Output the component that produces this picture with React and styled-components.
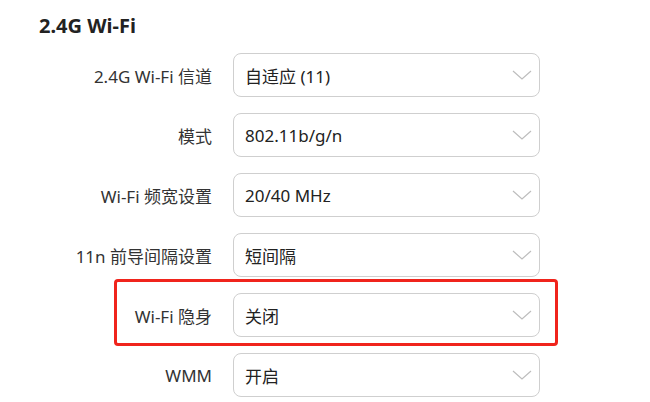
import styled, { createGlobalStyle } from "styled-components";

const GlobalStyle = createGlobalStyle`
  html, body {
    margin: 0;
    padding: 0;
    background: #fff;
  }
  body {
    font-family: "Noto Sans", "Noto Sans CJK SC", sans-serif;
    color: #222;
  }
`;

const Page = styled.div`
  padding: 14px 0 0 39px;
  width: 650px;
  height: 402px;
  box-sizing: border-box;
  overflow: hidden;
`;

const Title = styled.h2`
  margin: 0 0 15px;
  font-size: 20px;
  line-height: 24px;
  font-weight: 700;
  color: #222;
`;

const Form = styled.div`
  display: flex;
  flex-direction: column;
  gap: 16px;
`;

const Row = styled.div`
  position: relative;
  display: grid;
  grid-template-columns: 173px 307px;
  column-gap: 21px;
  align-items: center;
  height: 44px;

  ${(p) =>
    p.$highlight &&
    `
    &::after {
      content: "";
      position: absolute;
      left: 75px;
      top: -14px;
      width: 444px;
      height: 67px;
      border: 3px solid #f0241c;
      border-radius: 4px;
      box-sizing: border-box;
      pointer-events: none;
    }
  `}
`;

const Label = styled.label`
  text-align: right;
  font-size: 17px;
  color: #333;
  white-space: nowrap;
`;

const Select = styled.div`
  display: flex;
  align-items: center;
  justify-content: space-between;
  height: 44px;
  box-sizing: border-box;
  padding: 0 7px 0 11px;
  border: 1px solid #cfcfcf;
  border-radius: 8px;
  background: #fff;
`;

const Value = styled.span`
  font-size: 17px;
  color: #222;
`;

const Chevron = () => (
  <svg width="20" height="10" viewBox="0 0 20 10" fill="none">
    <path d="M1 1 L10 9 L19 1" stroke="#bdbdbd" strokeWidth="1.2" />
  </svg>
);

const fields = [
  { label: "2.4G Wi-Fi 信道", value: "自适应 (11)" },
  { label: "模式", value: "802.11b/g/n" },
  { label: "Wi-Fi 频宽设置", value: "20/40 MHz" },
  { label: "11n 前导间隔设置", value: "短间隔" },
  { label: "Wi-Fi 隐身", value: "关闭", highlight: true },
  { label: "WMM", value: "开启" },
];

export default function App() {
  return (
    <>
      <GlobalStyle />
      <Page>
        <Title>2.4G Wi-Fi</Title>
        <Form>
          {fields.map((f) => (
            <Row key={f.label} $highlight={f.highlight}>
              <Label>{f.label}</Label>
              <Select>
                <Value>{f.value}</Value>
                <Chevron />
              </Select>
            </Row>
          ))}
        </Form>
      </Page>
    </>
  );
}
